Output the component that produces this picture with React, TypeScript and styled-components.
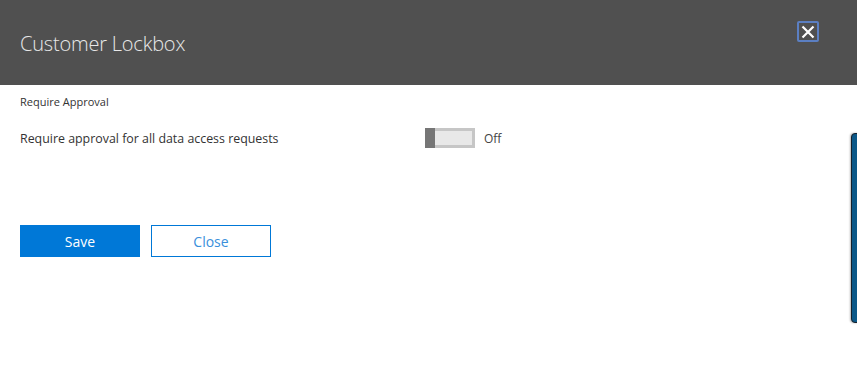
import React, { useState } from 'react';
import styled, { createGlobalStyle } from 'styled-components';

const GlobalStyle = createGlobalStyle`
  html, body {
    margin: 0;
    padding: 0;
    background: #fff;
    font-family: 'Open Sans', 'Noto Sans', 'Liberation Sans', sans-serif;
  }
`;

const Page = styled.div`
  position: relative;
  width: 857px;
  height: 384px;
  overflow: hidden;
  background: #fff;
`;

const Header = styled.header`
  height: 85px;
  background: #505050;
  display: flex;
  align-items: center;
  justify-content: space-between;
  padding: 0 38px 0 20px;
  box-sizing: border-box;
`;

const Title = styled.h1`
  margin: 0;
  font-size: 20px;
  font-weight: 300;
  color: #e8e8e8;
  letter-spacing: -0.2px;
  margin-top: 1px;
`;

const CloseIcon = styled.button`
  width: 22px;
  height: 21px;
  padding: 0;
  margin-top: -22px;
  border: 2px solid #5b7fc2;
  border-radius: 2px;
  background: transparent;
  display: flex;
  align-items: center;
  justify-content: center;
  cursor: pointer;
  box-sizing: border-box;
`;

const Body = styled.main`
  padding: 9px 20px 0;
  display: flex;
  flex-direction: column;
`;

const SectionLabel = styled.div`
  font-size: 11px;
  color: #333;
  line-height: 15px;
`;

const SettingRow = styled.div`
  display: flex;
  align-items: center;
  margin-top: 19px;
  height: 20px;
`;

const SettingText = styled.span`
  width: 405px;
  font-size: 12.4px;
  color: #333;
`;

const Toggle = styled.div`
  display: flex;
  align-items: center;
  gap: 9px;
  cursor: pointer;
`;

const Track = styled.div`
  display: flex;
  width: 50px;
  height: 20px;
`;

const Knob = styled.div`
  width: 10px;
  height: 20px;
  background: #767676;
`;

const Rail = styled.div<{ on: boolean }>`
  flex: 1;
  border: 3px solid #c6c6c6;
  border-left: none;
  background: ${p => (p.on ? '#0078d7' : '#e8e8e8')};
`;

const ToggleLabel = styled.span`
  font-size: 12px;
  color: #444;
`;

const Actions = styled.div`
  display: flex;
  gap: 11px;
  margin-top: 77px;
`;

const Button = styled.button<{ primary?: boolean }>`
  width: 120px;
  height: 32px;
  font-family: inherit;
  font-size: 14px;
  border: 1px solid #0078d7;
  background: ${p => (p.primary ? '#0078d7' : '#fff')};
  color: ${p => (p.primary ? '#fff' : '#3a8fdb')};
  cursor: pointer;
  padding: 0;
`;

const SidePeek = styled.div`
  position: absolute;
  right: -6px;
  top: 133px;
  width: 10px;
  height: 188px;
  background: #0b5888;
  border: 1px solid #15212c;
  border-radius: 4px 0 0 4px;
  box-shadow: -1px 0 2px rgba(0, 0, 0, 0.3);
`;

export default function App() {
  const [on, setOn] = useState(false);

  return (
    <Page>
      <GlobalStyle />
      <Header>
        <Title>Customer Lockbox</Title>
        <CloseIcon aria-label='Close'>
          <svg width='14' height='14' viewBox='0 0 14 14'>
            <path d='M1.5 1.5 L12.5 12.5 M12.5 1.5 L1.5 12.5' stroke='#fff' strokeWidth='2.2' />
          </svg>
        </CloseIcon>
      </Header>
      <Body>
        <SectionLabel>Require Approval</SectionLabel>
        <SettingRow>
          <SettingText>Require approval for all data access requests</SettingText>
          <Toggle onClick={() => setOn(!on)}>
            <Track>
              <Knob />
              <Rail on={on} />
            </Track>
            <ToggleLabel>{on ? 'On' : 'Off'}</ToggleLabel>
          </Toggle>
        </SettingRow>
        <Actions>
          <Button primary>Save</Button>
          <Button>Close</Button>
        </Actions>
      </Body>
      <SidePeek />
    </Page>
  );
}
